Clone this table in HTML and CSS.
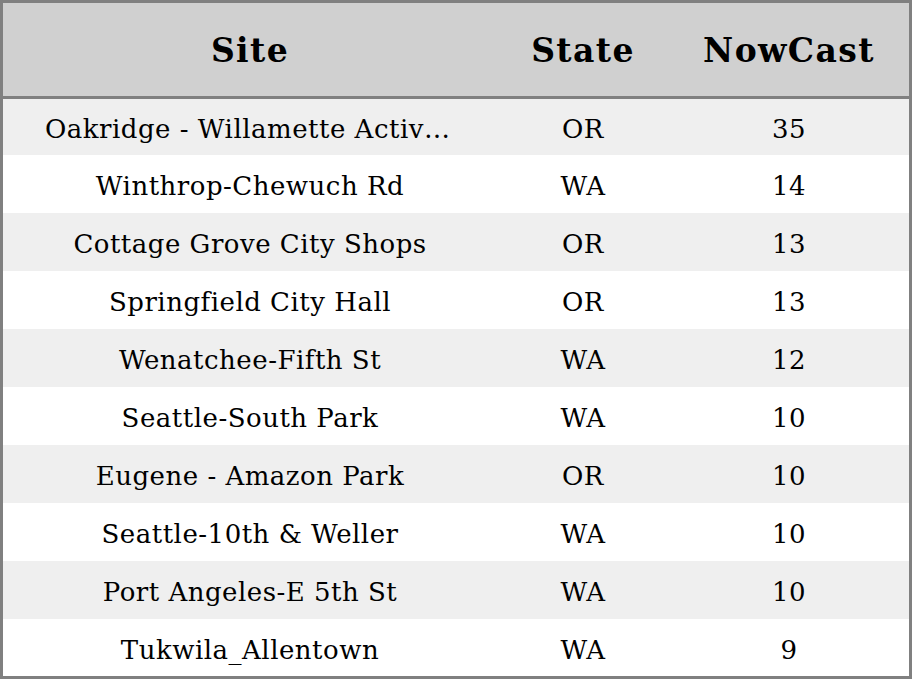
FILE: index.html
```html
<!DOCTYPE html>
<html>
<head>
<meta charset="utf-8">
<link rel="stylesheet" href="styles.css">
</head>
<body>
<table class="aq">
  <colgroup>
    <col class="c-site">
    <col class="c-state">
    <col class="c-now">
  </colgroup>
  <thead>
    <tr class="head"><th>Site</th><th>State</th><th>NowCast</th></tr>
  </thead>
  <tbody>
    <tr class="r first"><td class="site">Oakridge - Willamette Activity Center</td><td>OR</td><td>35</td></tr>
    <tr class="r"><td class="site">Winthrop-Chewuch Rd</td><td>WA</td><td>14</td></tr>
    <tr class="r"><td class="site">Cottage Grove City Shops</td><td>OR</td><td>13</td></tr>
    <tr class="r"><td class="site">Springfield City Hall</td><td>OR</td><td>13</td></tr>
    <tr class="r"><td class="site">Wenatchee-Fifth St</td><td>WA</td><td>12</td></tr>
    <tr class="r"><td class="site">Seattle-South Park</td><td>WA</td><td>10</td></tr>
    <tr class="r"><td class="site">Eugene - Amazon Park</td><td>OR</td><td>10</td></tr>
    <tr class="r"><td class="site">Seattle-10th &amp; Weller</td><td>WA</td><td>10</td></tr>
    <tr class="r"><td class="site">Port Angeles-E 5th St</td><td>WA</td><td>10</td></tr>
    <tr class="r last"><td class="site">Tukwila_Allentown</td><td>WA</td><td>9</td></tr>
  </tbody>
</table>
</body>
</html>
```
FILE: styles.css
```css
html, body {
  margin: 0;
  padding: 0;
  background: #ffffff;
}
.aq {
  width: 912px;
  table-layout: fixed;
  border-collapse: separate;
  border-spacing: 0;
  border: 3px solid #808080;
  font-family: "DejaVu Serif", serif;
  color: #000;
}
.c-site { width: 494px; }
.c-state { width: 172px; }
.c-now { width: 240px; }
.head th {
  height: 91px;
  padding: 2px 0 0;
  background: #d0d0d0;
  border-bottom: 3px solid #808080;
  font-size: 33px;
  letter-spacing: 1.4px;
  font-weight: bold;
  text-align: center;
  vertical-align: middle;
}
.r td {
  height: 54px;
  padding: 4px 0 0;
  font-size: 26px;
  letter-spacing: 0.5px;
  text-align: center;
  vertical-align: middle;
  white-space: nowrap;
}
.r.first td { height: 52px; }
.r.last td { height: 53px; }
.r:nth-child(odd) td { background: #efefef; }
.r:nth-child(even) td { background: #ffffff; }
.r td.site {
  padding: 4px 42px 0;
  overflow: hidden;
  text-overflow: ellipsis;
}
```
